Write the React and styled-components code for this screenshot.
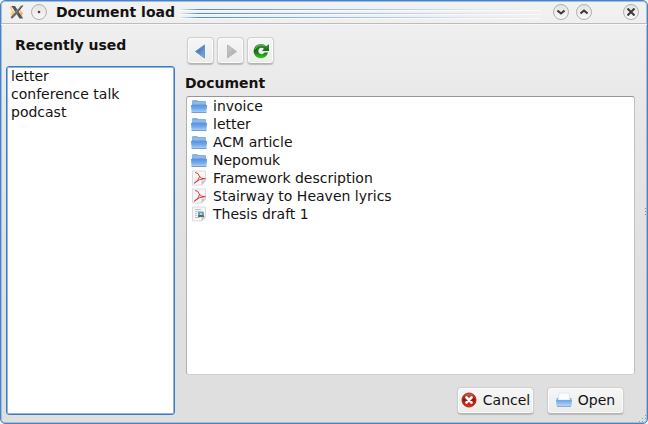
import React, { useState } from "react";
import styled, { createGlobalStyle, css } from "styled-components";

const recent = ["letter", "conference talk", "podcast"];

const documents = [
  { name: "invoice", type: "folder" },
  { name: "letter", type: "folder" },
  { name: "ACM article", type: "folder" },
  { name: "Nepomuk", type: "folder" },
  { name: "Framework description", type: "pdf" },
  { name: "Stairway to Heaven lyrics", type: "pdf" },
  { name: "Thesis draft 1", type: "text" },
];

const LogoIcon = () => (
  <svg width="16" height="16" viewBox="0 0 16 16" aria-hidden="true">
    <path d="M1 3 L4 1 L3 5 L6 9 L3 12 L1 10 L3 8 Z" fill="#f9c58d" />
    <path d="M11 6 L14 9 L13 12 L15 14 L11 12 Z" fill="#f6b27c" />
    <path d="M2.5 2 L6 2 L14 14.5 L10.5 14.5 Z" fill="#55534f" />
    <path d="M14.5 1 L12 1.5 L7 7 L1.5 13 L3 15 L9 9 Z" fill="#8a897c" />
    <path d="M13.5 2 L7.5 9 L2.5 14" stroke="#45443f" fill="none" />
  </svg>
);

const FolderIcon = () => (
  <svg width="16" height="16" viewBox="0 0 16 16" aria-hidden="true">
    <defs>
      <linearGradient id="folderFront" x1="0" y1="0" x2="0" y2="1">
        <stop offset="0" stopColor="#5792df" />
        <stop offset="0.5" stopColor="#71a8ea" />
        <stop offset="1" stopColor="#a5cdf8" />
      </linearGradient>
    </defs>
    <path d="M1 3.5 Q1 2 2 2 H6 L7 3 H14 Q15 3 15 4 V8 H1 Z" fill="#84afdf" />
    <path d="M1.5 4 H14.5 V6 H1.5 Z" fill="#8fb9e8" />
    <path d="M0 7 H16 L15.5 14 H0.5 Z" fill="url(#folderFront)" />
    <path d="M1 6.5 H15" stroke="#78a8e0" />
    <path d="M0.5 14.5 H15.5" stroke="#7b9cc4" />
  </svg>
);

const PageShape = () => (
  <>
    <path d="M1.5 1 H14.5 V11 L10.5 15 H1.5 Z" fill="#f7f7f7" stroke="#dcdcdc" />
    <path d="M15 10.5 L10.5 15.5 V11.5 Q10.5 10.5 11.5 10.5 Z" fill="#c8c8c8" />
  </>
);

const PdfIcon = () => (
  <svg width="16" height="16" viewBox="0 0 16 16" aria-hidden="true">
    <PageShape />
    <path
      d="M4.500 2.500 Q7.500 2.500 8.500 6.500 Q10 9 14 8.800 M14 8.500 Q8 8.500 3.500 13 M8.700 6.500 Q8 10.500 3.500 13"
      fill="none"
      stroke="#e0343c"
      strokeLinecap="round"
    />
  </svg>
);

const TextIcon = () => (
  <svg width="16" height="16" viewBox="0 0 16 16" aria-hidden="true">
    <PageShape />
    <path d="M4 3.5 H10 M4 5.5 H12 M4 7.5 H6 M4 9.5 H6 M4 11.5 H9" stroke="#bcc2c6" />
    <rect x="7" y="6" width="6" height="5" fill="#5aa5e4" />
    <path d="M7 11 V9.5 L10 8.5 L13 9.5 V11 Z" fill="#5c6a5a" />
    <rect x="9" y="7" width="2" height="2" fill="#e2ce74" />
  </svg>
);

const ArrowIcon = ({ forward }) => (
  <svg width="16" height="16" viewBox="0 0 16 16" aria-hidden="true">
    <defs>
      <linearGradient id="arrowBack" x1="0" y1="0" x2="1" y2="1">
        <stop offset="0" stopColor="#2f5d98" />
        <stop offset="1" stopColor="#83b1ea" />
      </linearGradient>
      <linearGradient id="arrowForward" x1="0" y1="0" x2="1" y2="1">
        <stop offset="0" stopColor="#cdcdcd" />
        <stop offset="1" stopColor="#a3a3a3" />
      </linearGradient>
    </defs>
    {forward ? (
      <path d="M4.5 2 L13.5 8.500 L4.5 15 Z" fill="url(#arrowForward)" stroke="#b8b8b8" strokeLinejoin="round" />
    ) : (
      <path d="M11.5 2 L2.5 8.500 L11.5 15 Z" fill="url(#arrowBack)" stroke="#6a94c8" strokeLinejoin="round" />
    )}
  </svg>
);

const ReloadIcon = () => (
  <svg width="16" height="16" viewBox="0 0 16 16" aria-hidden="true">
    <defs>
      <linearGradient id="reload" x1="0" y1="0" x2="0" y2="1">
        <stop offset="0" stopColor="#3a943a" />
        <stop offset="0.5" stopColor="#176a17" />
        <stop offset="1" stopColor="#2ed018" />
      </linearGradient>
    </defs>
    <path
      d="M16 1 V8 H9 L11 5.8 Q8.500 4 6.300 5.500 Q4.500 7.500 6 10 Q8 12 10.500 10.500 L11.500 9.500 H15 Q13.500 15 8 15.300 Q1.500 15 0.500 8.500 Q1 1.500 7.500 1 Q11 0.800 13.300 3.300 Z"
      fill="url(#reload)"
    />
    <path d="M2 6 Q4 2 8 2 Q10 2 12 3" stroke="#6fb66a" fill="none" />
  </svg>
);

const CancelIcon = () => (
  <svg width="16" height="16" viewBox="0 0 16 16" aria-hidden="true">
    <defs>
      <linearGradient id="cancelBall" x1="0" y1="0" x2="0" y2="1">
        <stop offset="0" stopColor="#d0695c" />
        <stop offset="0.45" stopColor="#a01208" />
        <stop offset="1" stopColor="#e83020" />
      </linearGradient>
    </defs>
    <circle cx="8" cy="8" r="7" fill="url(#cancelBall)" stroke="#a8281c" />
    <path
      d="M5.500 5.500 L10.500 10.500 M10.500 5.500 L5.500 10.500"
      stroke="#fff"
      strokeWidth="2.6"
      strokeLinecap="round"
    />
  </svg>
);

const OpenIcon = () => (
  <svg width="16" height="16" viewBox="0 0 16 16" aria-hidden="true">
    <defs>
      <linearGradient id="openFront" x1="0" y1="0" x2="0" y2="1">
        <stop offset="0" stopColor="#6ca3e6" />
        <stop offset="1" stopColor="#b0d5fb" />
      </linearGradient>
    </defs>
    <path d="M0.500 6 H15.500 V10 H0.500 Z" fill="#86b2e4" />
    <path d="M3 1 H13 L13.500 8 H2.500 Z" fill="#fafcff" stroke="#e2e8f2" />
    <path d="M0 8 H16 L15.500 14 H0.500 Z" fill="url(#openFront)" />
    <path d="M1 14.500 H15" stroke="#8fabd0" />
  </svg>
);

const fileIcons = { folder: FolderIcon, pdf: PdfIcon, text: TextIcon };

function App() {
  const [selected, setSelected] = useState(null);

  return (
    <>
      <GlobalStyle />
      <Window>
        <TitleBar>
          <LogoIcon />
          <RoundButton aria-label="On all desktops">
            <svg width="8" height="8" viewBox="0 0 8 8">
              <circle cx="4" cy="4" r="1.300" fill="#444" />
            </svg>
          </RoundButton>
          <Title>Document load</Title>
          <Stripes>
            <i />
            <i />
            <i />
          </Stripes>
          <WindowControls>
            <RoundButton aria-label="Minimize">
              <svg width="8" height="8" viewBox="0 0 8 8">
                <path d="M0.500 2.500 L4 5.500 L7.500 2.500" />
              </svg>
            </RoundButton>
            <RoundButton aria-label="Maximize">
              <svg width="8" height="8" viewBox="0 0 8 8">
                <path d="M0.500 5.500 L4 2.500 L7.500 5.500" />
              </svg>
            </RoundButton>
            <CloseButton aria-label="Close">
              <svg width="8" height="8" viewBox="0 0 8 8">
                <path d="M0.500 0.500 L7.500 7.500 M7.500 0.500 L0.500 7.500" />
              </svg>
            </CloseButton>
          </WindowControls>
        </TitleBar>
        <Content>
          <Sidebar>
            <SidebarHeading id="recent">Recently used</SidebarHeading>
            <RecentList role="listbox" aria-labelledby="recent" tabIndex={0}>
              {recent.map((name) => (
                <Row key={name} role="option" aria-selected={false}>
                  {name}
                </Row>
              ))}
            </RecentList>
          </Sidebar>
          <Browser>
            <Toolbar>
              <ToolButton aria-label="Back">
                <ArrowIcon />
              </ToolButton>
              <ToolButton aria-label="Forward" disabled>
                <ArrowIcon forward />
              </ToolButton>
              <ToolButton aria-label="Reload">
                <ReloadIcon />
              </ToolButton>
            </Toolbar>
            <BrowserHeading id="documents">Document</BrowserHeading>
            <FileList role="listbox" aria-labelledby="documents">
              {documents.map(({ name, type }) => {
                const Icon = fileIcons[type];
                return (
                  <Row
                    key={name}
                    role="option"
                    aria-selected={selected === name}
                    $selected={selected === name}
                    onClick={() => setSelected(name)}
                  >
                    <Icon />
                    {name}
                  </Row>
                );
              })}
            </FileList>
            <Actions>
              <ActionButton>
                <CancelIcon />
                Cancel
              </ActionButton>
              <ActionButton>
                <OpenIcon />
                Open
              </ActionButton>
            </Actions>
          </Browser>
        </Content>
        <SideGrip />
        <Grip width="8" height="8" viewBox="0 0 8 8" aria-hidden="true">
          <path d="M6 0h1v1h-1z M3 3h1v1h-1z M6 3h1v1h-1z M0 6h1v1h-1z M3 6h1v1h-1z" />
        </Grip>
      </Window>
    </>
  );
}

const GlobalStyle = createGlobalStyle`
  * {
    box-sizing: border-box;
  }

  body {
    margin: 0;
    background: #fff;
    color: #141312;
    font-family: "DejaVu Sans", sans-serif;
    font-size: 14px;
    line-height: 18px;
  }

  button {
    font: inherit;
    color: inherit;
  }
`;

const Window = styled.main`
  position: relative;
  display: flex;
  flex-direction: column;
  min-height: 100vh;
  border: 1px solid #4a83c0;
  border-radius: 5px;
  background: linear-gradient(#f2f2f2 0, #efefef 24px, #e6e6e6 130px, #e0e0e0 270px, #dfdfdf 100%);
  box-shadow: inset 0 0 0 1px #9dbfe5;
`;

const TitleBar = styled.header`
  display: flex;
  align-items: center;
  height: 23px;
  padding: 0 8px;
  border-bottom: 1px solid #bcbcbc;

  > svg {
    margin-right: 6px;
  }
`;

const RoundButton = styled.button`
  display: flex;
  align-items: center;
  justify-content: center;
  width: 16px;
  height: 16px;
  padding: 0;
  border: 1px solid #b0b0b0;
  border-radius: 50%;
  background: linear-gradient(#e4e4e4, #f8f8f8);

  path {
    fill: none;
    stroke: #3d3935;
    stroke-width: 2;
  }
`;

const CloseButton = styled(RoundButton)`
  margin-left: 24px;
`;

const Title = styled.h1`
  margin: 0 4px 0 9px;
  font-size: 14px;
  font-weight: bold;
  white-space: nowrap;
`;

const Stripes = styled.div`
  flex: 1;
  display: flex;
  flex-direction: column;
  gap: 2px;
  padding-top: 4px;

  i {
    height: 2px;
    border-bottom: 1px solid #fafafa;
    background: linear-gradient(90deg, transparent, #4a8ccc 20px, #73a7dc 25%, #a9c8e8 55%, #dbe4ee 80%, transparent);
    background-clip: padding-box;
  }
`;

const WindowControls = styled.div`
  display: flex;
  gap: 7px;
  margin-left: 12px;
`;

const Content = styled.div`
  flex: 1;
  display: flex;
  gap: 10px;
  padding: 12px 12px 8px 5px;
  border-top: 1px solid #f8f8f8;
`;

const Sidebar = styled.section`
  flex: 0 0 27%;
  max-width: 169px;
  display: flex;
  flex-direction: column;
`;

const heading = css`
  margin: 0;
  font-size: 14px;
  font-weight: bold;
`;

const SidebarHeading = styled.h2`
  ${heading}
  padding: 0 0 12px 9px;
  margin-top: -1px;
`;

const List = styled.ul`
  flex: 1;
  margin: 0;
  padding: 0 4px;
  list-style: none;
  background: #fff;
  border-radius: 3px;
`;

const RecentList = styled(List)`
  border: 1px solid #3a7bcd;
  box-shadow: inset 0 0 0 1px #8fb6e3;
  outline: none;
`;

const FileList = styled(List)`
  margin-left: 1px;
  border: 1px solid;
  border-color: #969696 #c0c0c0 #d0d0d0 #b0b0b0;
`;

const Row = styled.li`
  display: flex;
  align-items: center;
  gap: 6px;
  height: 18px;
  white-space: nowrap;
  background: ${(props) => (props.$selected ? "#b5d3f5" : "none")};
`;

const Browser = styled.section`
  flex: 1;
  min-width: 0;
  display: flex;
  flex-direction: column;
`;

const Toolbar = styled.div`
  display: flex;
  gap: 3px;
  margin-left: 2px;
`;

const raised = css`
  display: flex;
  align-items: center;
  height: 27px;
  border: 1px solid #cfcfcf;
  border-bottom-color: #b4b4b4;
  border-radius: 4px;
  background: linear-gradient(#f6f6f6, #ececeb);
  box-shadow: inset 0 0 0 1px #fbfbfb, 0 1px 1px #bbb;
`;

const ToolButton = styled.button`
  ${raised}
  justify-content: center;
  width: 27px;
  padding: 0;
`;

const BrowserHeading = styled.h2`
  ${heading}
  padding: 10px 0 4px;
`;

const Actions = styled.div`
  display: flex;
  justify-content: flex-end;
  gap: 13px;
  padding: 12px 11px 1px 0;
`;

const ActionButton = styled.button`
  ${raised}
  justify-content: center;
  gap: 6px;
  min-width: 77px;
  padding: 0 2px 1px;
`;

const SideGrip = styled.span`
  position: absolute;
  top: 50%;
  right: 1px;
  width: 1px;
  height: 7px;
  margin-top: -4px;
  background: repeating-linear-gradient(#888 0 1px, transparent 1px 3px);
`;

const Grip = styled.svg`
  position: absolute;
  right: 0;
  bottom: 0;
  fill: #909aa5;
`;

export default App;
